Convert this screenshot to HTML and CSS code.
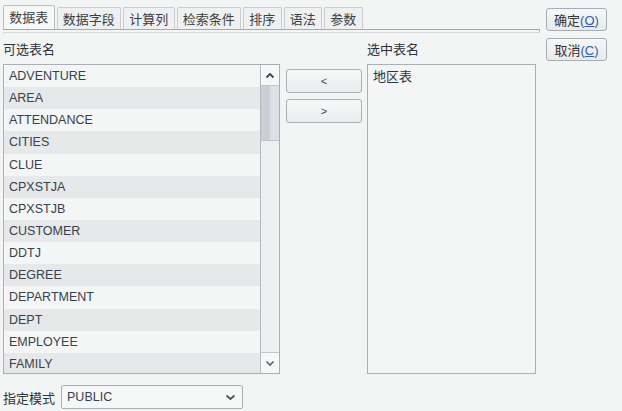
FILE: index.html
```html
<!DOCTYPE html>
<html lang="zh-CN">
<head>
  <meta charset="UTF-8" />
  <title>数据表</title>
  <link rel="stylesheet" href="styles.css">
</head>
<body>
  <div class="window">
    <div class="main">
      <div class="tabs">
        <div class="tab active">数据表</div>
        <div class="tab">数据字段</div>
        <div class="tab">计算列</div>
        <div class="tab">检索条件</div>
        <div class="tab">排序</div>
        <div class="tab">语法</div>
        <div class="tab">参数</div>
      </div>
      <div class="tab-rule"></div>

      <div class="content">
        <div class="label">可选表名</div>
        <div></div>
        <div class="label right-label">选中表名</div>

        <div class="list">
          <div class="items">
            <div class="row">ADVENTURE</div>
            <div class="row">AREA</div>
            <div class="row">ATTENDANCE</div>
            <div class="row">CITIES</div>
            <div class="row">CLUE</div>
            <div class="row">CPXSTJA</div>
            <div class="row">CPXSTJB</div>
            <div class="row">CUSTOMER</div>
            <div class="row">DDTJ</div>
            <div class="row">DEGREE</div>
            <div class="row">DEPARTMENT</div>
            <div class="row">DEPT</div>
            <div class="row">EMPLOYEE</div>
            <div class="row">FAMILY</div>
          </div>
          <div class="scrollbar">
            <div class="arrow">
              <svg width="10" height="7" viewBox="0 0 10 7"><polyline points="1.5,5.5 5,2 8.5,5.5" fill="none" stroke="#3d4550" stroke-width="1.8"/></svg>
            </div>
            <div class="track">
              <div class="thumb"></div>
            </div>
            <div class="arrow down">
              <svg width="10" height="7" viewBox="0 0 10 7"><polyline points="1.5,1.5 5,5 8.5,1.5" fill="none" stroke="#5a626c" stroke-width="1.6"/></svg>
            </div>
          </div>
        </div>

        <div class="moves">
          <button class="move">&lt;</button>
          <button class="move">&gt;</button>
        </div>

        <div class="list picked">
          <div class="picked-item">地区表</div>
        </div>
      </div>

      <div class="footer">
        <span class="footer-label">指定模式</span>
        <div class="combo">
          <span>PUBLIC</span>
          <svg width="11" height="7" viewBox="0 0 11 7"><polyline points="1.5,1.5 5.5,5 9.5,1.5" fill="none" stroke="#4a525c" stroke-width="1.7"/></svg>
        </div>
      </div>
    </div>

    <div class="side">
      <button class="action">确定<span class="key">(<u>O</u>)</span></button>
      <button class="action">取消<span class="key">(<u>C</u>)</span></button>
    </div>
  </div>
</body>
</html>
```

FILE: styles.css
```css
body {
  margin: 0;
  background: #f3f4f4;
  font-family: "Liberation Sans", "Noto Sans CJK SC", sans-serif;
  font-size: 12.5px;
  color: #36414d;
}
.window {
  display: flex;
  padding: 5px 0 0 3px;
}
.main {
  width: 537px;
}
.tabs {
  display: flex;
  align-items: flex-end;
  gap: 2px;
  height: 24px;
}
.tab {
  height: 22px;
  line-height: 21px;
  padding: 0 5.25px;
  border: 1px solid #c9cdd0;
  border-bottom: none;
  border-radius: 2px 2px 0 0;
  background: #eef0f1;
  font-family: "Noto Sans CJK SC", sans-serif;
  font-size: 13px;
  color: #3a3f45;
  box-sizing: border-box;
}
.tab.active {
  height: 24px;
  background: #f7f8f8;
  border-color: #b9bec2;
}
.tab-rule {
  height: 2px;
  border-top: 1px solid #a3a9ae;
  border-bottom: 1px solid #d6dadd;
  border-right: 1px solid #b5babe;
}
.content {
  display: grid;
  grid-template-columns: 277px 76px 168px;
  column-gap: 6px;
  grid-template-rows: 31px 310px;
}
.label {
  font-family: "Noto Sans CJK SC", sans-serif;
  font-size: 13px;
  line-height: 16px;
  padding-top: 8px;
  color: #2f3338;
}
.right-label {
  margin-left: -1px;
}
.list {
  display: flex;
  border: 1px solid #a9afb4;
  background: #f4f5f5;
  box-sizing: border-box;
  overflow: hidden;
}
.items {
  flex: 1;
}
.row {
  height: 22.15px;
  line-height: 22px;
  padding-left: 5px;
}
.row:nth-child(even) {
  background: #e7e8e9;
}
.scrollbar {
  width: 18px;
  display: flex;
  flex-direction: column;
  border-left: 1px solid #b4b9bd;
  background: #eef0f1;
}
.arrow {
  height: 20px;
  display: flex;
  align-items: center;
  justify-content: center;
  background: #f6f7f7;
  border-bottom: 1px solid #c3c7cb;
}
.arrow.down {
  border-bottom: none;
  border-top: 1px solid #c3c7cb;
}
.track {
  flex: 1;
  background: #edeff0;
}
.thumb {
  height: 54px;
  background: linear-gradient(to right, #cbd0d6 0, #cbd0d6 50%, #dde0e4 50%, #dde0e4 100%);
  border-bottom: 1px solid #c0c5ca;
}
.moves {
  display: flex;
  flex-direction: column;
  gap: 6px;
  padding-top: 5px;
}
.move {
  height: 24px;
  border: 1px solid #aab0b6;
  border-radius: 3px;
  background: linear-gradient(#f7f8f9, #e9ebed);
  font-family: "Liberation Sans", sans-serif;
  font-size: 11px;
  color: #3e4650;
  padding: 0;
}
.picked {
  display: block;
  margin-left: -1px;
  padding: 2px 0 0 5px;
  background: #f4f5f5;
}
.picked-item {
  font-family: "Noto Sans CJK SC", sans-serif;
  font-size: 13px;
  line-height: 18px;
  color: #2f3338;
}
.footer {
  display: flex;
  align-items: center;
  gap: 6px;
  margin-top: 11px;
}
.footer-label {
  font-family: "Noto Sans CJK SC", sans-serif;
  font-size: 13px;
  color: #2f3338;
}
.combo {
  width: 182px;
  height: 24px;
  box-sizing: border-box;
  display: flex;
  align-items: center;
  justify-content: space-between;
  padding: 0 6px 0 5px;
  border: 1px solid #a9afb4;
  border-radius: 2px;
  background: #f6f7f7;
}
.side {
  display: flex;
  flex-direction: column;
  gap: 7px;
  margin-left: 6px;
  padding-top: 3px;
}
.action {
  width: 61px;
  height: 23px;
  border: 1px solid #a7adb3;
  border-radius: 3px;
  background: linear-gradient(#f6f7f8, #e7e9eb);
  font-family: "Noto Sans CJK SC", sans-serif;
  font-size: 13px;
  color: #2f3338;
  padding: 0;
}
.key {
  color: #2e5fa6;
  font-family: "Liberation Sans", sans-serif;
}
```
